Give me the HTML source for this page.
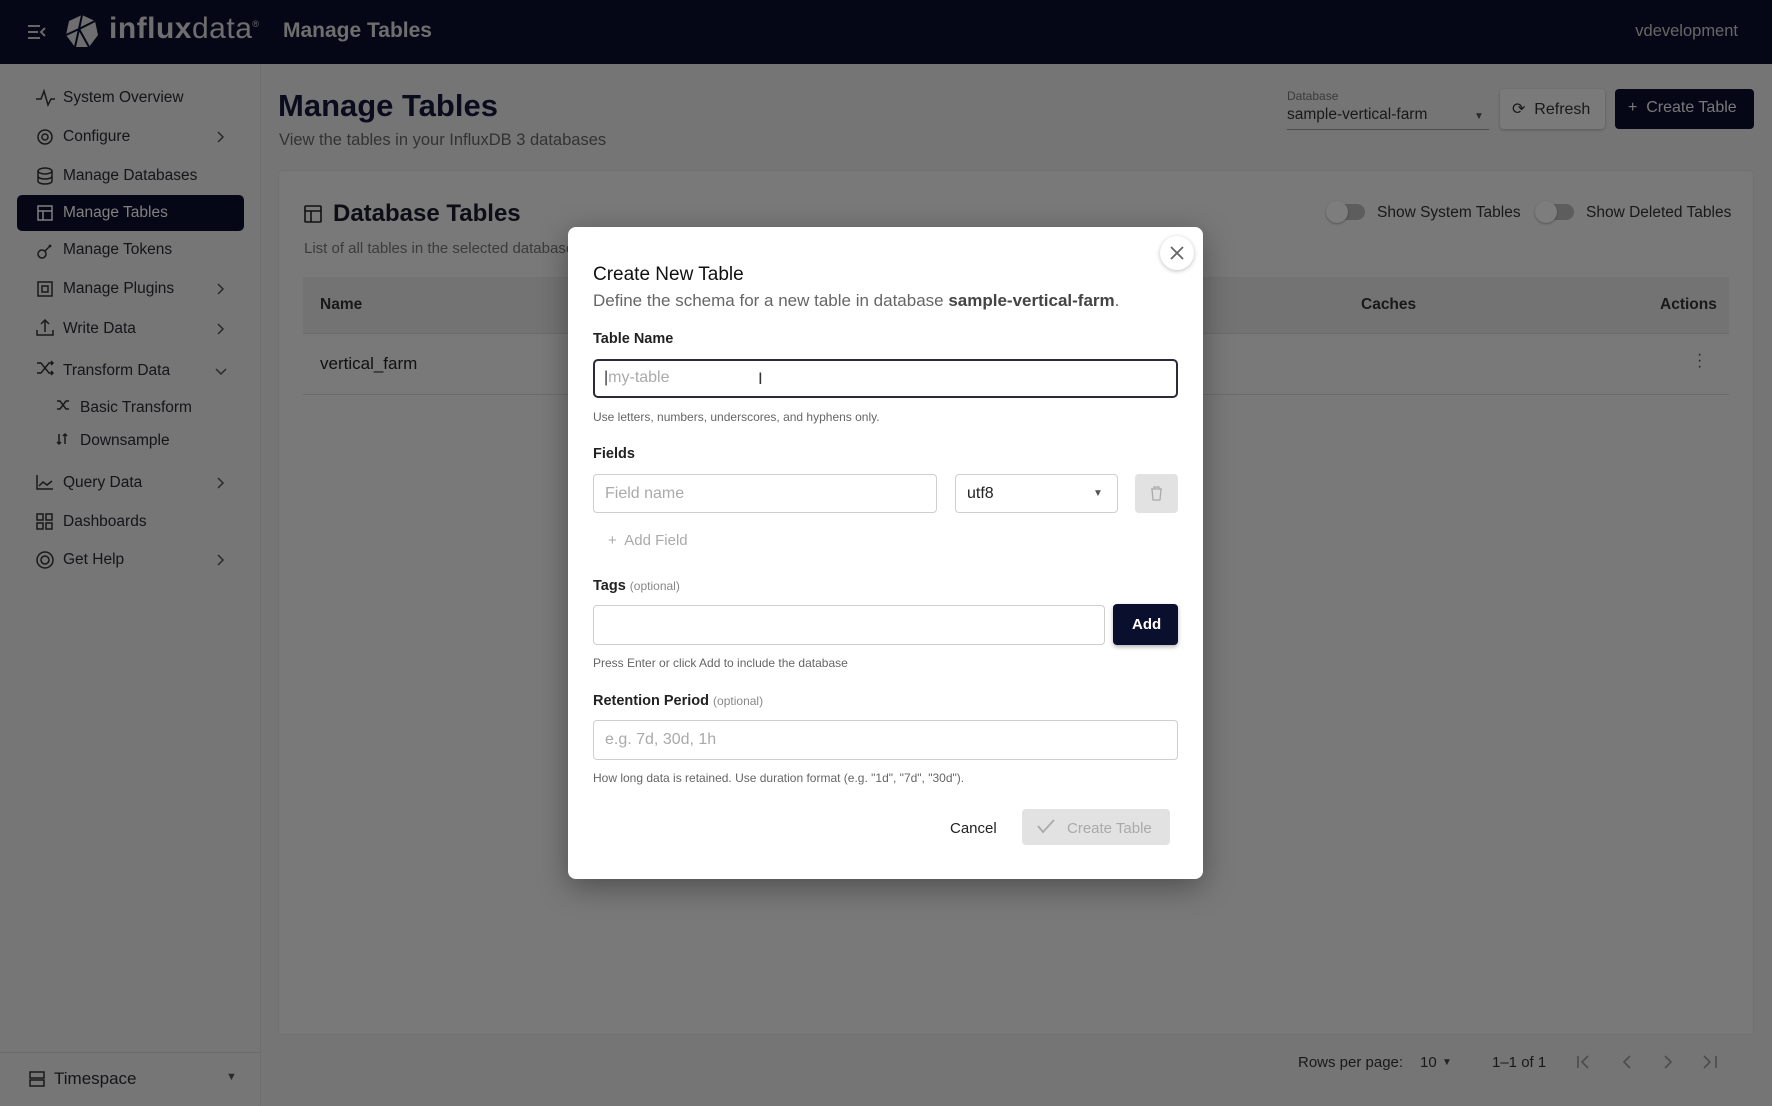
<!DOCTYPE html>
<html><head><meta charset="utf-8"><style>
*{box-sizing:border-box;margin:0;padding:0}
body{width:1772px;height:1106px;overflow:hidden;font-family:"Liberation Sans",sans-serif;background:#ebebeb;position:relative;color:#1d1d2b}
.a{position:absolute;white-space:nowrap}
.hdr{left:0;top:0;width:1772px;height:64px;background:#0b0f2e}
.side{left:0;top:64px;width:261px;height:1042px;background:#ececec;border-right:1px solid #dcdcdc}
.ni{font-size:15.5px;color:#2a2a35;transform:translateY(-50%)}
.ic{transform:translateY(-50%)}
.chev{color:#555;font-size:16px}
.card{left:278px;top:170px;width:1476px;height:865px;background:#f2f2f2;border:1px solid #e2e2e2;border-radius:4px}
.ov{left:0;top:0;width:1772px;height:1106px;background:rgba(0,0,0,.5)}
.modal{left:568px;top:227px;width:635px;height:652px;background:#fff;border-radius:8px;box-shadow:0 8px 30px rgba(0,0,0,.35)}
.lbl{font-size:14.5px;color:#222;font-weight:600}
.help{font-size:12px;color:#666}
.inp{border:1px solid #cfcfcf;border-radius:4px;background:#fff}
.opt{font-size:12px;color:#888;font-weight:400}
</style></head><body>
<div class="a hdr"></div>
<svg class="a" style="left:27px;top:23px" width="20" height="18" viewBox="0 0 20 18"><path d="M1 3h12M1 9h10M1 15h12M18 5l-4 4 4 4" stroke="#ccc" stroke-width="2" fill="none"/></svg>
<svg class="a" style="left:64px;top:13px" width="36" height="36" viewBox="0 0 36 36"><path d="M18 2l13 6 3 14-9 12H11L2 22l3-14z" fill="#ddd"/><path d="M18 2l-3 14 16-8M15 16l10 18M15 16L2 22M15 16l-4 18" stroke="#0b0f2e" stroke-width="2" fill="none"/></svg>
<div class="a" style="left:109px;top:12px;font-size:30px;color:#ddd;letter-spacing:0.5px"><b>influx</b>data<sup style="font-size:9px">®</sup></div>
<div class="a" style="left:283px;top:19px;font-size:21px;color:#ddd;font-weight:bold">Manage Tables</div>
<div class="a" style="right:34px;top:22px;font-size:16.5px;color:#ccc">vdevelopment</div>

<div class="a side"></div>
<div class="a" style="left:17px;top:195px;width:227px;height:36px;background:#0b0f2e;border-radius:5px"></div>
<div class="a ni" style="left:63px;top:98px">System Overview</div>
<div class="a ni" style="left:63px;top:137px">Configure</div>
<div class="a ni" style="left:63px;top:176px">Manage Databases</div>
<div class="a ni" style="left:63px;top:213px;color:#fff">Manage Tables</div>
<div class="a ni" style="left:63px;top:250px">Manage Tokens</div>
<div class="a ni" style="left:63px;top:289px">Manage Plugins</div>
<div class="a ni" style="left:63px;top:329px">Write Data</div>
<div class="a ni" style="left:63px;top:371px">Transform Data</div>
<div class="a ni" style="left:80px;top:408px">Basic Transform</div>
<div class="a ni" style="left:80px;top:441px">Downsample</div>
<div class="a ni" style="left:63px;top:483px">Query Data</div>
<div class="a ni" style="left:63px;top:522px">Dashboards</div>
<div class="a ni" style="left:63px;top:560px">Get Help</div>
<svg class="a" style="left:0;top:64px" width="261" height="520">
<g stroke="#333" stroke-width="1.5" fill="none">
<path d="M36 35h5l3-8 4 14 3-6h4"/>
<circle cx="45" cy="73" r="7"/><circle cx="45" cy="73" r="3"/>
<ellipse cx="45" cy="107" rx="7" ry="3"/><path d="M38 107v10c0 4 14 4 14 0v-10M38 112c0 4 14 4 14 0"/>
<rect x="38" y="142" width="14" height="14" stroke="#fff"/><path d="M38 147h14M43 147v9" stroke="#fff"/>
<circle cx="42" cy="190" r="4"/><path d="M45 187l6-6M49 181l2 2"/>
<rect x="38" y="218" width="14" height="14"/><rect x="42" y="222" width="6" height="6"/>
<path d="M37 266v5h16v-5M45 268v-12M41 260l4-4 4 4"/>
<path d="M37 299h4l8 10h4M37 309h4l8-10h4M51 297l2 2-2 2M51 307l2 2-2 2"/>
<path d="M57 337h3l6 8h3M57 345h3l6-8h3"/>
<path d="M59 370v10M57 378l2 2 2-2M65 380v-10M63 372l2-2 2 2"/>
<path d="M37 411v14h16M39 422l4-4 4 3 5-4"/>
<rect x="37" y="450" width="6" height="6"/><rect x="46" y="450" width="6" height="6"/><rect x="37" y="459" width="6" height="6"/><rect x="46" y="459" width="6" height="6"/>
<circle cx="45" cy="496" r="8"/><circle cx="45" cy="496" r="4"/>
<path d="M218 68l5 5-5 5M218 220l5 5-5 5M218 260l5 5-5 5M216 305l5 5 5-5M218 414l5 5-5 5M218 491l5 5-5 5" stroke="#555"/>
</g></svg>
<div class="a" style="left:0;top:1052px;width:261px;border-top:1px solid #d8d8d8"></div>
<svg class="a" style="left:29px;top:1071px" width="16" height="16"><g stroke="#333" stroke-width="1.5" fill="none"><rect x="1" y="1" width="14" height="6"/><rect x="1" y="9" width="14" height="6"/></g></svg>
<div class="a" style="left:54px;top:1069px;font-size:17px;color:#2a2a35">Timespace</div>
<div class="a" style="left:226px;top:1071px;font-size:11px;color:#555">▼</div>

<div class="a" style="left:278px;top:88px;font-size:31px;font-weight:bold;color:#14163a">Manage Tables</div>
<div class="a" style="left:279px;top:131px;font-size:16.5px;color:#666">View the tables in your InfluxDB 3 databases</div>
<div class="a" style="left:1287px;top:89px;font-size:12px;color:#777">Database</div>
<div class="a" style="left:1287px;top:106px;font-size:15.5px;color:#333">sample-vertical-farm</div>
<div class="a" style="left:1474px;top:111px;font-size:10px;color:#555">▼</div>
<div class="a" style="left:1287px;top:129px;width:202px;border-top:1px solid #999"></div>
<div class="a" style="left:1500px;top:89px;width:105px;height:40px;background:#f4f4f4;border-radius:4px;box-shadow:0 1px 3px rgba(0,0,0,.25)"></div>
<div class="a" style="left:1512px;top:99px;font-size:16px;color:#333">⟳&nbsp; Refresh</div>
<div class="a" style="left:1615px;top:89px;width:139px;height:40px;background:#0b0f2e;border-radius:4px"></div>
<div class="a" style="left:1628px;top:99px;font-size:16px;color:#eee">+&nbsp; Create Table</div>

<div class="a card"></div>
<svg class="a" style="left:304px;top:205px" width="18" height="18"><g stroke="#222" stroke-width="1.6" fill="none"><rect x="1" y="1" width="16" height="16" rx="1"/><path d="M1 6h16M7 6v11"/></g></svg>
<div class="a" style="left:333px;top:200px;font-size:24px;font-weight:600;color:#1a1a2a">Database Tables</div>
<div class="a" style="left:304px;top:240px;font-size:15px;color:#777">List of all tables in the selected database</div>
<div class="a" style="left:1329px;top:204px;width:36px;height:16px;border-radius:8px;background:#bbb"></div>
<div class="a" style="left:1326px;top:201px;width:22px;height:22px;border-radius:50%;background:#fafafa;box-shadow:0 1px 2px rgba(0,0,0,.3)"></div>
<div class="a" style="left:1377px;top:204px;font-size:15.5px;color:#333">Show System Tables</div>
<div class="a" style="left:1538px;top:204px;width:36px;height:16px;border-radius:8px;background:#bbb"></div>
<div class="a" style="left:1535px;top:201px;width:22px;height:22px;border-radius:50%;background:#fafafa;box-shadow:0 1px 2px rgba(0,0,0,.3)"></div>
<div class="a" style="left:1586px;top:204px;font-size:15.5px;color:#333">Show Deleted Tables</div>
<div class="a" style="left:303px;top:277px;width:1426px;height:57px;background:#e6e6e6;border-bottom:1px solid #d8d8d8"></div>
<div class="a" style="left:320px;top:296px;font-size:15.5px;color:#333;font-weight:600">Name</div>
<div class="a" style="left:1361px;top:296px;font-size:15.5px;color:#333;font-weight:600">Caches</div>
<div class="a" style="left:1660px;top:296px;font-size:15.5px;color:#333;font-weight:600">Actions</div>
<div class="a" style="left:303px;top:394px;width:1426px;border-top:1px solid #d8d8d8"></div>
<div class="a" style="left:320px;top:354px;font-size:17px;color:#222">vertical_farm</div>
<div class="a" style="left:1697px;top:352px;font-size:16px;color:#444;line-height:6px">·<br>·<br>·</div>
<div class="a" style="left:1298px;top:1054px;font-size:15px;color:#333">Rows per page:</div>
<div class="a" style="left:1420px;top:1054px;font-size:15px;color:#333">10</div>
<div class="a" style="left:1442px;top:1057px;font-size:10px;color:#444">▼</div>
<div class="a" style="left:1492px;top:1054px;font-size:15px;color:#333">1–1 of 1</div>
<svg class="a" style="left:1575px;top:1053px" width="150" height="18"><g stroke="#999" stroke-width="1.6" fill="none"><path d="M3 3v12M13 3l-6 6 6 6M55 3l-6 6 6 6M90 3l6 6-6 6M129 3l6 6-6 6M141 3v12"/></g></svg>

<div class="a ov"></div>

<div class="a modal"></div>
<div class="a" style="left:1160px;top:236px;width:34px;height:34px;border-radius:50%;background:#fff;box-shadow:0 1px 4px rgba(0,0,0,.25)"></div>
<svg class="a" style="left:1169px;top:245px" width="16" height="16"><path d="M2 2l12 12M14 2L2 14" stroke="#666" stroke-width="1.8"/></svg>
<div class="a" style="left:593px;top:264px;font-size:19px;color:#111">Create New Table</div>
<div class="a" style="left:593px;top:291px;font-size:17px;color:#666">Define the schema for a new table in database <b style="color:#444">sample-vertical-farm</b>.</div>
<div class="a lbl" style="left:593px;top:331px">Table Name</div>
<div class="a" style="left:593px;top:359px;width:585px;height:39px;border:2px solid #2a2a3a;border-radius:5px"></div>
<div class="a" style="left:604px;top:369px;font-size:16px;color:#aaa"><span style="color:#333">|</span>my-table</div>
<div class="a" style="left:758px;top:369px;font-size:17px;color:#333">I</div>
<div class="a help" style="left:593px;top:410px">Use letters, numbers, underscores, and hyphens only.</div>
<div class="a lbl" style="left:593px;top:446px">Fields</div>
<div class="a inp" style="left:593px;top:474px;width:344px;height:39px"></div>
<div class="a" style="left:605px;top:485px;font-size:16px;color:#aaa">Field name</div>
<div class="a inp" style="left:955px;top:474px;width:163px;height:39px"></div>
<div class="a" style="left:967px;top:485px;font-size:16px;color:#222">utf8</div>
<div class="a" style="left:1093px;top:488px;font-size:10px;color:#555">▼</div>
<div class="a" style="left:1135px;top:474px;width:43px;height:39px;background:#e2e2e2;border-radius:4px"></div>
<svg class="a" style="left:1150px;top:486px" width="13" height="15"><g stroke="#aaa" stroke-width="1.3" fill="none"><path d="M1 3h11M4 3V1h5v2M2 3l1 11h7l1-11"/></g></svg>
<div class="a" style="left:608px;top:532px;font-size:15px;color:#aaa">+&nbsp; Add Field</div>
<div class="a lbl" style="left:593px;top:578px">Tags <span class="opt">(optional)</span></div>
<div class="a inp" style="left:593px;top:605px;width:512px;height:40px"></div>
<div class="a" style="left:1113px;top:604px;width:65px;height:41px;background:#0b0f2e;border-radius:4px;box-shadow:0 2px 4px rgba(0,0,0,.3)"></div>
<div class="a" style="left:1132px;top:616px;font-size:15px;color:#fff;font-weight:600">Add</div>
<div class="a help" style="left:593px;top:656px">Press Enter or click Add to include the database</div>
<div class="a lbl" style="left:593px;top:693px">Retention Period <span class="opt">(optional)</span></div>
<div class="a inp" style="left:593px;top:720px;width:585px;height:40px"></div>
<div class="a" style="left:605px;top:731px;font-size:16px;color:#aaa">e.g. 7d, 30d, 1h</div>
<div class="a help" style="left:593px;top:771px">How long data is retained. Use duration format (e.g. "1d", "7d", "30d").</div>
<div class="a" style="left:950px;top:820px;font-size:15px;color:#222">Cancel</div>
<div class="a" style="left:1022px;top:809px;width:148px;height:36px;background:#e2e2e2;border-radius:4px"></div>
<svg class="a" style="left:1036px;top:818px" width="20" height="16"><path d="M2 8l5 6L18 2" stroke="#aaa" stroke-width="1.8" fill="none"/></svg>
<div class="a" style="left:1067px;top:820px;font-size:15px;color:#aaa">Create Table</div>
</body></html>
